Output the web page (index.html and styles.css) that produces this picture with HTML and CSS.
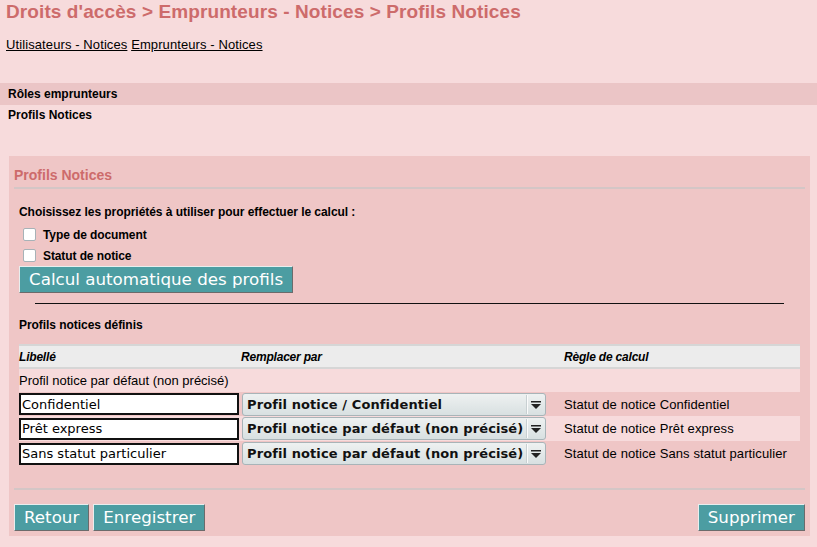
FILE: index.html
```html
<!DOCTYPE html>
<html lang="fr">
<head>
<meta charset="utf-8">
<title>Profils Notices</title>
<link rel="stylesheet" href="styles.css">
</head>
<body>
<h1 class="page-title">Droits d'accès &gt; Emprunteurs - Notices &gt; Profils Notices</h1>
<div class="tabs">
  <a href="#" class="tab-link">Utilisateurs - Notices</a>
  <a href="#" class="tab-link">Emprunteurs - Notices</a>
</div>
<div class="subtabs">
  <div class="subtab subtab-active">Rôles emprunteurs</div>
  <div class="subtab">Profils Notices</div>
</div>
<form class="panel">
  <h3 class="panel-title">Profils Notices</h3>
  <div class="panel-body">
    <div class="label-strong">Choisissez les propriétés à utiliser pour effectuer le calcul :</div>
    <label class="check-row first"><input type="checkbox" class="check"><span>Type de document</span></label>
    <label class="check-row"><input type="checkbox" class="check"><span>Statut de notice</span></label>
    <button type="button" class="btn btn-calc">Calcul automatique des profils</button>
    <hr class="sep">
    <div class="label-strong defined">Profils notices définis</div>
    <table class="grid">
      <thead>
        <tr>
          <th class="col1">Libellé</th>
          <th class="col2">Remplacer par</th>
          <th class="col3">Règle de calcul</th>
        </tr>
      </thead>
      <tbody>
        <tr class="even">
          <td colspan="3" class="default-cell">Profil notice par défaut (non précisé)</td>
        </tr>
        <tr class="odd first-row">
          <td><input type="text" class="text-in" value="Confidentiel"></td>
          <td><span class="sel-wrap"><select class="sel"><option>Profil notice / Confidentiel</option></select><svg class="sel-arrow" width="10" height="8" viewBox="0 0 10 8"><rect x="0" y="0" width="10" height="1.5" fill="#222"/><polygon points="0,3 10,3 5,8" fill="#222"/></svg></span></td>
          <td class="rule">Statut de notice Confidentiel</td>
        </tr>
        <tr class="even">
          <td><input type="text" class="text-in" value="Prêt express"></td>
          <td><span class="sel-wrap"><select class="sel"><option>Profil notice par défaut (non précisé)</option></select><svg class="sel-arrow" width="10" height="8" viewBox="0 0 10 8"><rect x="0" y="0" width="10" height="1.5" fill="#222"/><polygon points="0,3 10,3 5,8" fill="#222"/></svg></span></td>
          <td class="rule">Statut de notice Prêt express</td>
        </tr>
        <tr class="odd">
          <td><input type="text" class="text-in" value="Sans statut particulier"></td>
          <td><span class="sel-wrap"><select class="sel"><option>Profil notice par défaut (non précisé)</option></select><svg class="sel-arrow" width="10" height="8" viewBox="0 0 10 8"><rect x="0" y="0" width="10" height="1.5" fill="#222"/><polygon points="0,3 10,3 5,8" fill="#222"/></svg></span></td>
          <td class="rule">Statut de notice Sans statut particulier</td>
        </tr>
      </tbody>
    </table>
  </div>
  <div class="panel-foot">
    <div class="foot-left">
      <button type="button" class="btn">Retour</button>
      <button type="button" class="btn">Enregistrer</button>
    </div>
    <button type="button" class="btn">Supprimer</button>
  </div>
</form>
</body>
</html>
```
FILE: styles.css
```css
html, body {
  margin: 0;
  padding: 0;
}
body {
  background: #f7dbdc;
  font-family: "Liberation Sans", Arial, sans-serif;
  font-size: 12px;
  color: #000;
  padding: 0 7px 0 6px;
  height: 547px;
  box-sizing: border-box;
}
.page-title {
  margin: 0;
  padding-top: 1px;
  font-size: 19px;
  line-height: 22px;
  font-weight: bold;
  color: #cd6b6b;
  letter-spacing: 0.1px;
}
.tabs {
  margin-top: 14px;
  line-height: 15px;
  font-size: 13px;
  letter-spacing: 0.1px;
}
.tab-link {
  color: #000;
  text-decoration: underline;
}
.subtabs {
  margin-top: 31px;
}
.subtab {
  font-weight: bold;
  height: 22px;
  line-height: 22px;
  margin-left: -6px;
  padding-left: 8px;
  margin-right: -7px;
}
.subtab-active {
  background: #ebc5c6;
  margin-bottom: -1px;
}
.panel {
  margin: 30px 0 0 3px;
  width: 801px;
  background: #efc6c6;
  padding: 0 5px 5px;
  box-sizing: border-box;
  height: 380px;
  display: flex;
  flex-direction: column;
}
.panel-title {
  margin: 0;
  font-size: 14px;
  color: #cd6b6b;
  font-weight: bold;
  line-height: 16px;
  padding: 11px 0 4px;
  border-bottom: 2px solid #d4c6c6;
}
.panel-body {
  padding: 0 5px;
  flex: 1;
  border-bottom: 2px solid #d4c6c6;
}
.label-strong {
  font-weight: bold;
  line-height: 14px;
  margin-top: 16px;
  letter-spacing: -0.05px;
}
.check-row {
  display: flex;
  align-items: center;
  font-weight: bold;
  height: 21px;
  letter-spacing: -0.1px;
}
.check-row.first {
  margin-top: 5px;
}
.check {
  appearance: none;
  -webkit-appearance: none;
  width: 13px;
  height: 13px;
  margin: 0 7px 0 4px;
  background: #fff;
  border: 1px solid #a7b2b7;
  border-radius: 2px;
  box-sizing: border-box;
}
.btn {
  font-family: "DejaVu Sans", sans-serif;
  font-size: 16.7px;
  color: #fff;
  background: #4c9da2;
  border: 1px solid;
  border-color: #e8eeee #6b6b6b #6b6b6b #e8eeee;
  padding: 0 9px;
  height: 27px;
  line-height: 23px;
  cursor: pointer;
}
.btn-calc {
  display: block;
  margin-top: 0;
}
.sep {
  width: 96%;
  border: 0;
  border-top: 1px solid #111;
  margin: 10px auto 0;
}
.defined {
  margin-top: 14px;
}
.grid {
  width: 100%;
  border-collapse: collapse;
  margin-top: 12px;
}
.grid th {
  background: #ececec;
  border-top: 2px solid #d6d6d6;
  border-bottom: 2px solid #d6d6d6;
  font-style: italic;
  font-weight: bold;
  text-align: left;
  height: 21px;
  padding: 0;
  letter-spacing: -0.2px;
}
.col1 { width: 222px; }
.col2 { width: 323px; }
.grid td {
  padding: 0;
  height: 25px;
}
.grid .first-row td {
  height: 24px;
}
.grid .default-cell {
  height: 23px;
  font-size: 13px;
}
.even td { background: #f7dbdc; }
.odd td { background: #efc6c6; }
.text-in {
  display: block;
  width: 220px;
  height: 22px;
  box-sizing: border-box;
  border: 2px solid #111;
  background: #fff;
  font-family: "DejaVu Sans", sans-serif;
  font-size: 13px;
  padding: 0 1px;
  margin: 0;
}
.sel-wrap {
  position: relative;
  display: block;
  width: 304px;
  margin-left: 1px;
}
.sel {
  appearance: none;
  -webkit-appearance: none;
  display: block;
  width: 304px;
  height: 23px;
  box-sizing: border-box;
  border: 1px solid #a8b4b8;
  border-radius: 3px;
  background: linear-gradient(#eef1f1, #d8e0e1);
  font-family: "DejaVu Sans", sans-serif;
  font-size: 13px;
  font-weight: bold;
  color: #111;
  padding: 0 0 0 4px;
  margin: 0;
  letter-spacing: 0.1px;
}
.sel-arrow {
  position: absolute;
  right: 5px;
  top: 8px;
}
.sel-wrap::before {
  content: "";
  position: absolute;
  right: 18px;
  top: 2px;
  bottom: 2px;
  width: 1px;
  background: #fbfbfb;
  border-left: 1px solid #c8d0d2;
}
.rule {
  font-size: 13px;
  letter-spacing: 0.1px;
}
.panel-foot {
  display: flex;
  justify-content: space-between;
  padding-top: 14px;
}
.foot-left {
  display: flex;
  gap: 4px;
}
```
